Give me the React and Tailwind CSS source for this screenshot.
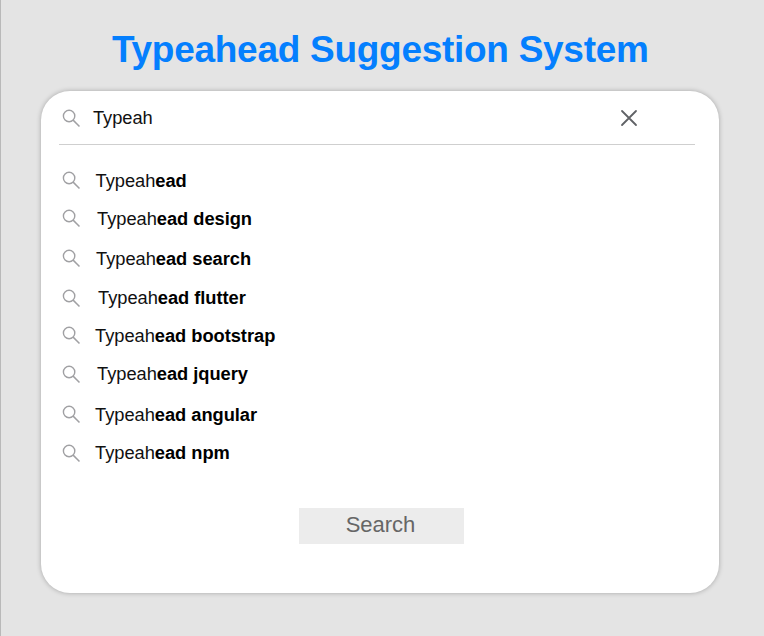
const suggestions = [
  { rest: 'ead', row: 'h-[38px]', icon: 'mt-[1px]', text: 'pl-[14.5px]' },
  { rest: 'ead design', row: 'h-[40px]', icon: 'mt-[1px]', text: 'pl-[16px]' },
  { rest: 'ead search', row: 'h-[39px]', icon: 'mt-[1px]', text: 'pl-[15px]' },
  { rest: 'ead flutter', row: 'h-[38px]', icon: 'mt-[2px]', text: 'pl-[17px]' },
  { rest: 'ead bootstrap', row: 'h-[38px]', icon: 'mt-[1px]', text: 'pl-[14px]' },
  { rest: 'ead jquery', row: 'h-[41px]', icon: 'mt-[2px]', text: 'pl-[16px]' },
  { rest: 'ead angular', row: 'h-[38px]', icon: 'mt-[1px]', text: 'pl-[14px]' },
  { rest: 'ead npm', row: 'h-[38px]', icon: 'mt-[2px]', text: 'pl-[14px]' },
];

function SearchIcon({ className }) {
  return (
    <svg
      className={`h-[19px] w-[19px] shrink-0 ${className}`}
      viewBox="0 0 19 19"
      fill="none"
      stroke="#a0a0a3"
      strokeWidth="1.4"
    >
      <circle cx="7.1" cy="7" r="5.7" />
      <path d="M11.1 11.1L17.5 17.5" strokeWidth="1.5" />
    </svg>
  );
}

export default function App() {
  return (
    <div className="flex h-[636px] w-[764px] flex-col overflow-hidden border-l border-[#b9b9b9] bg-[#e4e4e4] font-['Liberation_Sans',Arial,sans-serif]">
      <h1 className="ml-[111px] mt-[28px] h-[42px] whitespace-nowrap text-[37px] leading-[44px] font-bold tracking-[-0.28px] text-[#047ffe]">
        Typeahead Suggestion System
      </h1>
      <main className="ml-[40px] mt-[21px] flex h-[502px] w-[678px] flex-col rounded-[29px] bg-white pl-[18px] shadow-[0_0_5px_rgba(0,0,0,0.28)]">
        <div className="flex h-[54px] w-[636px] shrink-0 items-start border-b border-[#cfcfcf] pl-[2px] pt-[16px]">
          <SearchIcon className="ml-[0.5px] mt-[1.5px]" />
          <span className="ml-[12.5px] text-[18.3px] leading-[22px] tracking-[-0.05px] text-[#111]">Typeah</span>
          <svg
            className="ml-auto mr-[57px] mt-[2px] h-[18px] w-[18px]"
            viewBox="0 0 18 18"
            fill="none"
            stroke="#606266"
            strokeWidth="1.8"
            strokeLinecap="round"
          >
            <path d="M2 2L16 16M16 2L2 16" />
          </svg>
        </div>
        <ul className="mt-[25px] pl-[3px]">
          {suggestions.map((s) => (
            <li key={s.rest} className={`flex items-start ${s.row}`}>
              <SearchIcon className={s.icon} />
              <span className={`whitespace-pre text-[18.3px] leading-[22px] tracking-[-0.03px] text-[#111] ${s.text}`}>
                Typeah<b className="font-bold text-black">{s.rest}</b>
              </span>
            </li>
          ))}
        </ul>
        <button className="ml-[240px] mt-[27.5px] flex h-[36.5px] w-[165px] shrink-0 justify-center bg-[#ececec] pr-[2px] text-[22px] leading-[33px] text-[#666]">
          Search
        </button>
      </main>
    </div>
  );
}
